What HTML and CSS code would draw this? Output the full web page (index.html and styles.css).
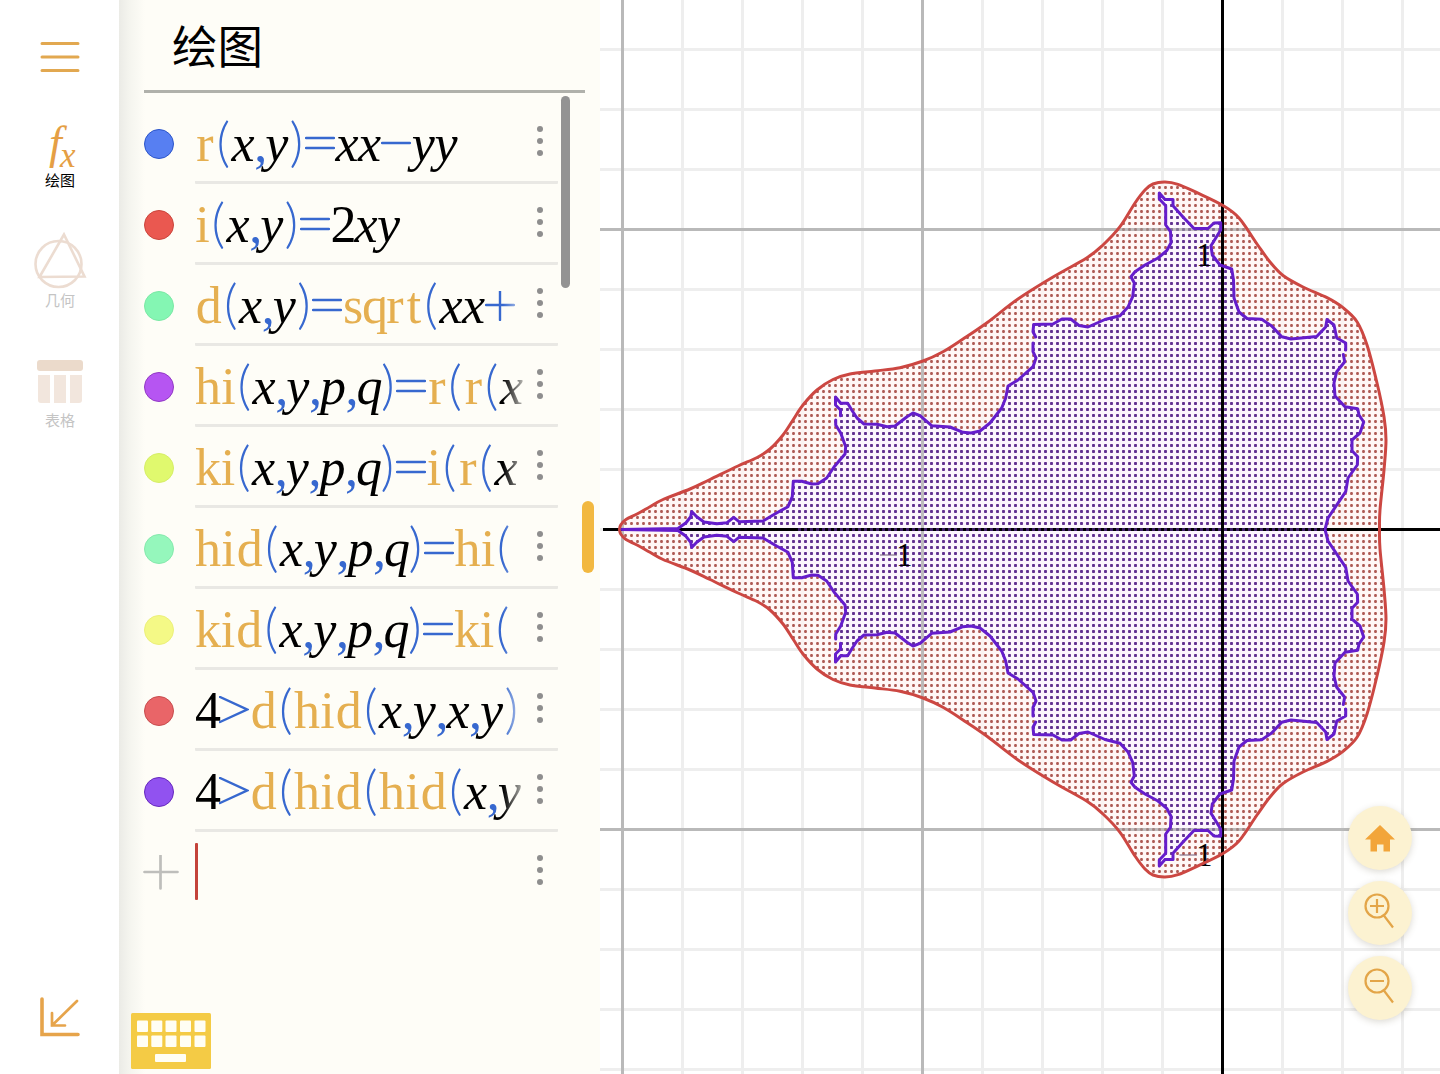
FILE: index.html
```html
<!DOCTYPE html>
<html lang="zh-CN">
<head>
<meta charset="utf-8">
<title>绘图</title>
<link rel="stylesheet" href="styles.css">
</head>
<body>
<div class="app">
  <nav class="sidebar">
    <svg class="menu" width="40" height="32" viewBox="0 0 40 32"><path d="M2 2.5H38M2 16H38M2 29.500H38"/></svg>
    <div class="tool tool-active">
      <svg width="60" height="50" viewBox="0 0 60 50"><text x="19" y="34" font-size="46">f</text><text x="30" y="43" font-size="35">x</text></svg>
      <span>绘图</span>
    </div>
    <div class="tool tool-geometry">
      <svg width="60" height="60" viewBox="0 0 60 60"><circle cx="28.500" cy="35" r="23"/><path d="M34 5.500L9.500 48L54.500 47.500Z"/></svg>
      <span>几何</span>
    </div>
    <div class="tool tool-table">
      <svg width="46" height="43" viewBox="0 0 46 43"><rect width="46" height="11" rx="3" fill="#ebdacb"/><path d="M1 15H13V43H4Q1 43 1 40ZM17 15H29V43H17ZM33 15H45V40Q45 43 42 43H33Z" fill="#f2e6dd"/></svg>
      <span>表格</span>
    </div>
    <svg class="collapse" width="42" height="42" viewBox="0 0 42 42"><path d="M3 3V38.500H39" stroke-width="3.600"/><path d="M38 5L13 29.500M13 17V29.500H26" stroke-width="2.700"/></svg>
  </nav>

  <section class="panel">
    <h1>绘图</h1>
    <ul class="list">
      <li class="row"><i class="swatch blue"></i><div class="formula">r(x,y)=xx−yy</div><b class="more"></b></li>
      <li class="row"><i class="swatch red"></i><div class="formula">i(x,y)=2xy</div><b class="more"></b></li>
      <li class="row"><i class="swatch mint"></i><div class="formula">d(x,y)=sqrt(xx+</div><b class="more"></b></li>
      <li class="row"><i class="swatch purple"></i><div class="formula">hi(x,y,p,q)=r(r(x</div><b class="more"></b></li>
      <li class="row"><i class="swatch lime"></i><div class="formula">ki(x,y,p,q)=i(r(x</div><b class="more"></b></li>
      <li class="row"><i class="swatch aqua"></i><div class="formula">hid(x,y,p,q)=hi(</div><b class="more"></b></li>
      <li class="row"><i class="swatch yellow"></i><div class="formula">kid(x,y,p,q)=ki(</div><b class="more"></b></li>
      <li class="row"><i class="swatch rose"></i><div class="formula">4&gt;d(hid(x,y,x,y)</div><b class="more"></b></li>
      <li class="row"><i class="swatch violet"></i><div class="formula">4&gt;d(hid(hid(x,y</div><b class="more"></b></li>
      <li class="row row-new">
        <svg class="add" width="36" height="36" viewBox="0 0 36 36"><path d="M1.500 17H34.500M17.500 .5V33.500"/></svg>
        <div class="formula"><span class="caret"></span></div><b class="more"></b>
      </li>
    </ul>
    <svg class="keyboard" width="80" height="56" viewBox="0 0 80 56">
      <rect width="80" height="56" rx="1.500" fill="#f4cb45"/>
      <g fill="#fffef4">
        <rect x="6" y="7.500" width="11" height="11.500" rx="1"/><rect x="20.300" y="7.500" width="11" height="11.500" rx="1"/><rect x="34.500" y="7.500" width="11" height="11.500" rx="1"/><rect x="49" y="7.500" width="11" height="11.500" rx="1"/><rect x="63.500" y="7.500" width="11" height="11.500" rx="1"/>
        <rect x="6" y="22.500" width="11" height="11.500" rx="1"/><rect x="20.300" y="22.500" width="11" height="11.500" rx="1"/><rect x="34.500" y="22.500" width="11" height="11.500" rx="1"/><rect x="49" y="22.500" width="11" height="11.500" rx="1"/><rect x="63.500" y="22.500" width="11" height="11.500" rx="1"/>
        <rect x="24" y="41" width="31" height="8" rx="1"/>
      </g>
    </svg>
    <div class="scrollbar"></div>
    <div class="handle"></div>
  </section>

  <main class="graph">
    <svg class="plot" width="840" height="1074" viewBox="600 0 840 1074">
      <defs>
        <pattern id="minor" width="60" height="60" x="621" y="48" patternUnits="userSpaceOnUse"><path d="M1.500 0V60M0 1.500H60" stroke="#eeeeee" stroke-width="3"/></pattern>
        <pattern id="red-dots" width="6" height="6" patternUnits="userSpaceOnUse"><rect width="6" height="6" fill="#fff4f3" fill-opacity=".7"/><rect x=".1" y=".1" width="2.800" height="2.800" rx="1" fill="#ae5a54"/></pattern>
        <pattern id="violet-dots" width="6" height="6" patternUnits="userSpaceOnUse"><rect width="6" height="6" fill="#fbf4ff" fill-opacity=".75"/><rect x=".05" y=".05" width="2.900" height="2.900" rx=".8" fill="#602f91"/></pattern>
      </defs>
      <rect x="600" width="840" height="1074" fill="url(#minor)"/>
      <path id="red-fill" fill="url(#red-dots)"/>
      <path id="violet-fill" fill="url(#violet-dots)"/>
      <path d="M622.500 0V1074M922.500 0V1074M600 229.500H1440M600 829.500H1440" stroke="#999" stroke-opacity=".63" stroke-width="3"/>
      <path d="M1222.500 0V1074M603 529.500H1440" stroke="#000" stroke-width="3"/>
      <path d="M798 529.500H1326" stroke="#54288a" stroke-opacity=".75" stroke-width="3" stroke-dasharray="3 3"/>
      <g class="labels">
        <text x="1196" y="266">1</text>
        <text x="1196" y="866">1</text>
        <text x="896" y="566">1</text>
        <path d="M1179.500 855H1197M880 555H897"/>
      </g>
      <path id="red-line" class="curve" stroke="#cc4742"/>
      <path id="violet-line" class="curve" stroke="#651dcb"/>
    </svg>
    <div class="buttons">
      <div class="round"><svg width="30" height="28" viewBox="0 0 30 28"><path d="M15 1L30 15.500H25V27.500H18.500V20.500H12V27.500H5.500V15.500H0Z" fill="#f2a53a"/></svg></div>
      <div class="round"><svg class="lens" width="32" height="38" viewBox="0 0 32 38"><circle cx="14" cy="14" r="11.500"/><path d="M20.500 23L30 35.500M7 14H21M14 7V21"/></svg></div>
      <div class="round"><svg class="lens" width="32" height="38" viewBox="0 0 32 38"><circle cx="14" cy="14" r="11.500"/><path d="M20.500 23L30 35.500M7 14H21"/></svg></div>
    </div>
  </main>
</div>
<script src="script.js"></script>
</body>
</html>
```
FILE: styles.css
```css
* { box-sizing: border-box; }
body { margin: 0; background: #fff; font-family: "Noto Sans CJK SC", sans-serif; color: #000; }
.app { display: flex; height: 1074px; overflow: hidden; }

.sidebar { width: 119px; display: flex; flex-direction: column; align-items: center; padding: 41px 0 36px 1px; }
.menu path { fill: none; stroke: #e2a850; stroke-width: 3; stroke-linecap: round; }
.tool { display: flex; flex-direction: column; align-items: center; font-size: 15px; line-height: 20px; color: #c4c4c4; }
.tool svg { display: block; }
.tool-active { margin-top: 51px; color: #000; }
.tool-active svg { margin-bottom: -4px; overflow: visible; fill: #e59f45; font-family: "Liberation Serif", serif; font-style: italic; }
.tool-geometry { margin-top: 39px; }
.tool-geometry svg { fill: none; stroke: #ecdcd1; stroke-width: 2.6; }
.tool-geometry span { margin-top: 1px; }
.tool-table { margin-top: 50px; }
.tool-table span { margin-top: 7px; }
.collapse { margin-top: auto; fill: none; stroke: #e6a44b; stroke-linecap: round; }

.panel { position: relative; width: 481px; display: flex; flex-direction: column; background: linear-gradient(90deg, #ebebe6, #f5f5ef 11px, #fefdf7 26px); }
h1 { margin: 0 15px 0 25px; height: 93px; padding-left: 28px; border-bottom: 3px solid #b0b1ab; font-size: 45.5px; line-height: 89px; font-weight: 400; }
.list { list-style: none; margin: 10px 0 0; padding: 0 42px 0 25px; }
.row { display: flex; height: 81px; align-items: center; }
.swatch { flex: none; width: 30px; height: 30px; border-radius: 50%; margin-right: 21px; border: 1.5px solid; }
.blue { background: #577ff2; border-color: #2c55c9; }
.red { background: #ea5850; border-color: #ca453c; }
.mint { background: #84f6b3; border-color: #7be8a5; }
.purple { background: #b655f2; border-color: #9239c4; }
.lime { background: #e0f96e; border-color: #d6ee68; }
.aqua { background: #95f7bc; border-color: #86e9ad; }
.yellow { background: #f4f986; border-color: #ecf07a; }
.rose { background: #e96568; border-color: #c74d4e; }
.violet { background: #9152f0; border-color: #6629bd; }
.formula { flex: none; width: 363px; height: 81px; border-bottom: 3px solid #e9e8e4; border-radius: 1px; white-space: nowrap; font: 52px/78px "Liberation Serif", serif; }
.formula .text { display: block; width: 329px; height: 78px; overflow: hidden; mask-image: linear-gradient(90deg, #000 308px, rgba(0,0,0,.25) 329px); }
.formula .text span { display: inline-block; text-align: center; height: 78px; vertical-align: top; padding-top: 2px; }
.name { color: #e5af50; }
.variable { font-style: italic; }
.operator { color: #3768cf; }
.paren { color: #3768cf; font-family: Lato, sans-serif; font-size: 53px; font-weight: 300; line-height: 71px; }
.more { flex: none; width: 6px; height: 6px; margin: -5px 0 0 -21px; border-radius: 50%; background: #8e8e8e; box-shadow: 0 -12px #8e8e8e, 0 12px #8e8e8e; }
.add { flex: none; margin-left: -1px; margin-right: 16px; stroke: #bebebb; stroke-width: 2.7; stroke-linecap: round; }
.row-new .formula { border-bottom: 0; padding-top: 11px; }
.caret { display: block; width: 3px; height: 57px; border-radius: 1px; background: #c4433a; }
.keyboard { display: block; margin: auto 0 5px 12px; }
.scrollbar { position: absolute; left: 442px; top: 96px; width: 9px; height: 192px; border-radius: 5px; background: #939393; }
.handle { position: absolute; left: 463px; top: 501px; width: 12px; height: 72px; border-radius: 6px; background: #f2b840; }

.graph { position: relative; width: 840px; }
.plot { display: block; }
.curve { fill: none; stroke-width: 3; stroke-linejoin: round; stroke-linecap: round; }
.labels { font: 33px "Liberation Serif", serif; }
.labels path { stroke: #6f5a76; stroke-width: 1; }
.buttons { position: absolute; left: 748px; top: 806px; display: flex; flex-direction: column; gap: 11px; }
.round { width: 64px; height: 64px; border-radius: 50%; background: #fcf2d1; box-shadow: 0 2px 7px rgba(80,70,40,.2); display: flex; align-items: center; justify-content: center; }
.lens { fill: none; stroke: #e3a548; stroke-width: 2.2; margin: -5px 2px 0 0; }
```
FILE: script.js
```js
// Advance width of each glyph in the formula list.
const widths = {
  r: 20, i: 15, d: 27.5, h: 26, k: 25.5, s: 19, q: 23, t: 18, x: 22.7, y: 22.7, p: 25.5,
  ",": 11, "(": 16.5, ")": 17, "=": 30.5, "−": 31, "+": 31, ">": 31, 2: 24, 4: 24
};
const strokes = {
  "=": "M1 9H29M1 19H29",
  "−": "M1 14H29",
  "+": "M1 14H29M15 0V29",
  ">": "M1 1L28 13.5L1 26"
};

document.querySelectorAll(".formula").forEach(box => {
  const text = box.textContent.trim();
  if (!text) return;
  const line = document.createElement("div");
  line.className = "text";
  for (const token of text.match(/sqrt|hid|kid|hi|ki|./g)) {
    const kind = /^([()])$/.test(token) ? "paren"
      : /^[,=−+>]$/.test(token) ? "operator"
      : /^[xypq]$/.test(token) ? "variable"
      : /^\d$/.test(token) ? "number" : "name";
    for (const c of token) {
      const glyph = document.createElement("span");
      glyph.className = kind;
      glyph.style.width = widths[c] + "px";
      if (strokes[c]) {
        glyph.setAttribute("aria-label", c);
        glyph.innerHTML = `<svg width="30" height="30" viewBox="0 0 30 30" style="display:block;margin-top:24px"><path d="${strokes[c]}" fill="none" stroke="#3768cf" stroke-width="2.4" stroke-linecap="round"/></svg>`;
      } else {
        glyph.textContent = c;
      }
      line.append(glyph);
    }
  }
  box.replaceChildren(line);
});

// Upper halves of the two level curves; the lower halves are their reflections.
const axis = 529.5;
const outer = [[619.5,529.5],[620.7,525],[626,519.5],[637,514],[650,506.7],[663,499.5],[690,489],[710,479.5],[738,466],[756.7,457.7],[770,449],[783,435],[793,420],[803,405],[817,390],[833,379.5],[850,374],[875,371],[900,367.7],[923,361],[943,351.7],[963,339],[987,322.7],[1018,299],[1053,277],[1087,257.7],[1103,245],[1120,226.7],[1135,203],[1145,190],[1153,184],[1165,182],[1178,184.3],[1197,192.7],[1222,205],[1239,218],[1257,244],[1270,262],[1283,275.5],[1303,287],[1327,297.7],[1343,307.7],[1357,321.7],[1367,345],[1377,383],[1384,416.7],[1386,440],[1384,470],[1380,510],[1379.5,529.5]];
const inner = [
  [[622,529.5],[678,528.5],[686,522.7],[690.7,516.7],[691.7,511.5],[696.7,516.7],[704,522],[716.7,523.7],[727,522.7],[733.7,517.3],[739,521.7],[763,521],[777,512.7],[788,506.7],[792.3,496.7],[793.3,481.3],[801.7,481.3],[811.7,484],[818,483.7],[826.7,478],[834,467],[845,454],[845.7,446.7],[840.7,433],[835.7,425],[835.7,420]],
  [[840.5,415.7],[840.5,410],[835.5,405],[835.5,397],[840.7,403.3],[847.7,403.3],[851.7,410],[857,418],[864,424],[877,424.3],[887,426.7],[895,426],[907,416.7],[913,413],[920,415.7],[931.7,425.7],[950,427],[963,432.3],[971,433],[980,431],[990,423],[1001.7,408],[1005.7,398],[1008,386],[1018,380],[1033,366.7],[1036,358],[1033,351.7],[1033,343]],
  [[1035.7,337],[1033,331.7],[1033.7,324.5],[1053,324],[1062,319],[1070.7,319],[1079,325.5],[1088,327],[1105,319.5],[1120,315.7],[1128,307],[1132.7,296.7],[1134.3,283],[1131,276.7],[1135,271.7],[1145,265],[1158,258],[1166.7,250.7],[1171,242.7],[1170.5,231.7],[1165.7,225],[1165.7,205.7],[1159.3,199],[1159.3,193],[1165,199.5],[1173,199.5],[1173,205.7],[1183,217],[1194,228.5],[1208,228.5],[1214,223],[1220.7,222.7],[1220.7,230],[1211,245.7],[1212.3,255],[1220,265],[1231.7,269],[1233.5,280],[1234,298],[1239,312],[1247,318.5],[1261.7,319.3],[1271.7,326],[1281.7,336.7],[1291,339],[1316.7,336.5],[1325.7,327],[1327,319.5],[1334,325],[1336.7,338],[1345.7,343],[1345.7,350]],
  [[1343.3,354.5],[1344.7,361.7],[1336.7,371.7],[1334,383],[1335,396],[1345,406.7],[1357.7,408.7],[1359,415],[1363.7,422],[1360,433],[1352,440],[1352,450.7],[1357.7,456.7],[1357.3,465],[1348,478],[1345.7,491.7],[1328,518],[1325,529.5]]
];
const mirror = points => points.map(([x, y]) => [x, 2 * axis - y]);

function smooth(points) {
  let d = "M" + points[0];
  for (let i = 0; i < points.length - 1; i++) {
    const a = points[i - 1] || points[i], b = points[i], c = points[i + 1], e = points[i + 2] || c;
    d += `C${b[0] + (c[0] - a[0]) / 6} ${b[1] + (c[1] - a[1]) / 6} ${c[0] - (e[0] - b[0]) / 6} ${c[1] - (e[1] - b[1]) / 6} ${c[0]} ${c[1]}`;
  }
  return d;
}
const straight = points => "M" + points.join("L");
const setPath = (id, d) => document.getElementById(id).setAttribute("d", d);

const loop = smooth(outer.concat(mirror(outer).reverse().slice(1)));
setPath("red-fill", loop + "Z");
setPath("red-line", loop);
const flat = inner.flat();
setPath("violet-fill", straight(flat.concat(mirror(flat).reverse())) + "Z");
setPath("violet-line", inner.map(part => straight(part) + straight(mirror(part))).join(""));
```
